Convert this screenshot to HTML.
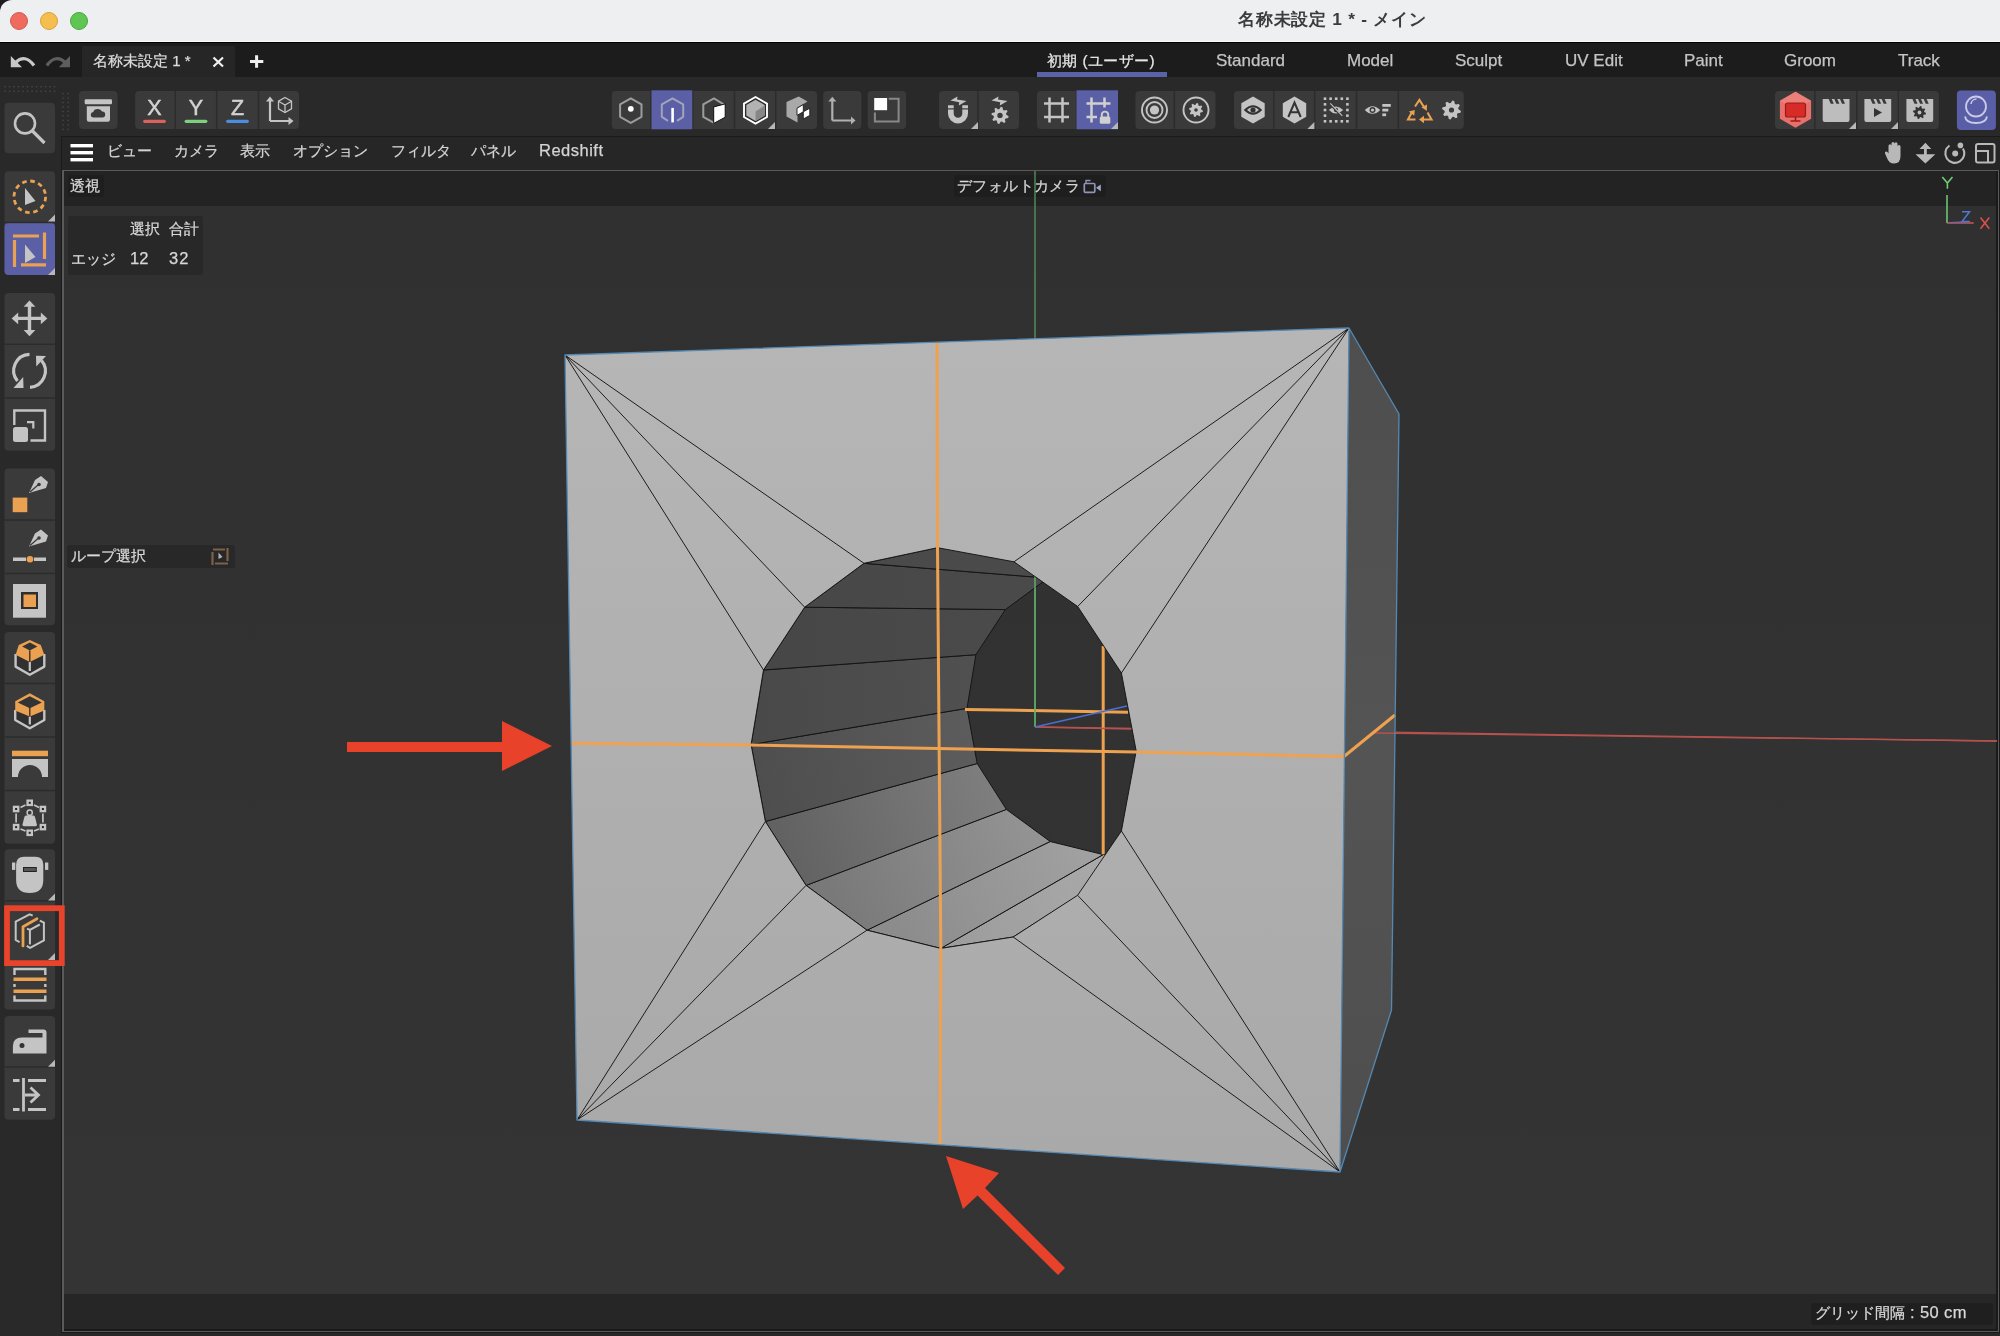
<!DOCTYPE html><html><head><meta charset="utf-8"><style>
*{margin:0;padding:0;box-sizing:border-box}
html,body{width:2000px;height:1336px;overflow:hidden;background:#1e1e1e;font-family:"Liberation Sans",sans-serif;}
.a{position:absolute}
.t{position:absolute;white-space:nowrap;line-height:1;will-change:transform;-webkit-text-stroke:0.25px currentColor}
.btn{position:absolute;background:#3a3a3a;border-radius:4px}
.sep{position:absolute;background:#2a2a2a;width:1px}
</style></head><body>
<div class="a" style="left:0;top:0;width:2000px;height:42px;background:#eeeff1;border-top-left-radius:12px"></div>
<div class="a" style="left:0;top:0;width:12px;height:12px;background:#161a2e;z-index:-1"></div>
<div class="a" style="left:10px;top:11.8px;width:18px;height:18px;border-radius:50%;background:#ee6b5e;border:0.8px solid #d35a4f"></div>
<div class="a" style="left:40px;top:11.8px;width:18px;height:18px;border-radius:50%;background:#f5bf4f;border:0.8px solid #d9a13c"></div>
<div class="a" style="left:70px;top:11.8px;width:18px;height:18px;border-radius:50%;background:#5fc553;border:0.8px solid #4aa73f"></div>
<div class="t" style="left:1238px;top:11px;font-size:17.3px;letter-spacing:0.75px;font-weight:bold;color:#3c3c3c;-webkit-text-stroke:0">名称未設定 1 * - メイン</div>
<div class="a" style="left:0;top:41px;width:2000px;height:1px;background:#fafafa"></div>
<div class="a" style="left:0;top:42px;width:2000px;height:1px;background:#000"></div>
<div class="a" style="left:0;top:43px;width:2000px;height:34px;background:#1c1c1c"></div>
<div class="a" style="left:82px;top:46px;width:153px;height:31px;background:#262626"></div>
<div class="t" style="left:93px;top:53px;font-size:15px;color:#dcdcdc">名称未設定 1 *</div>
<div class="t" style="left:1047px;top:52.5px;font-size:15.3px;letter-spacing:0.4px;color:#e6e6e6">初期 (ユーザー)</div>
<div class="t" style="left:1216px;top:52px;font-size:17px;color:#c4c4c4">Standard</div>
<div class="t" style="left:1347px;top:52px;font-size:17px;color:#c4c4c4">Model</div>
<div class="t" style="left:1455px;top:52px;font-size:17px;color:#c4c4c4">Sculpt</div>
<div class="t" style="left:1565px;top:52px;font-size:17px;color:#c4c4c4">UV Edit</div>
<div class="t" style="left:1684px;top:52px;font-size:17px;color:#c4c4c4">Paint</div>
<div class="t" style="left:1784px;top:52px;font-size:17px;color:#c4c4c4">Groom</div>
<div class="t" style="left:1898px;top:52px;font-size:17px;color:#c4c4c4">Track</div>
<div class="a" style="left:1037px;top:72px;width:130px;height:5px;background:#5b63a8"></div>
<div class="a" style="left:0;top:77px;width:2000px;height:59px;background:#292929"></div>
<div class="a" style="left:0;top:77px;width:61px;height:1259px;background:#292929"></div>
<div class="a" style="left:61px;top:136px;width:1939px;height:1200px;background:#1a1a1a"></div>
<div class="a" style="left:62px;top:137px;width:1938px;height:33px;background:#262626"></div>
<div class="a" style="left:62px;top:170px;width:1937px;height:1162px;border:1px solid #5a5a5a;border-left-width:2px"></div>
<div class="a" style="left:61px;top:1333px;width:1939px;height:3px;background:#282828"></div>
<div class="a" style="left:64px;top:171px;width:1932px;height:35px;background:#232323"></div>
<div class="a" style="left:64px;top:206px;width:1932px;height:1088px;background:linear-gradient(#303030,#343434)"></div>
<div class="a" style="left:64px;top:1294px;width:1932px;height:35px;background:#262626"></div>
<svg class="a" style="left:0;top:0" width="2000" height="1336" viewBox="0 0 2000 1336">
<defs>
<linearGradient id="gf" x1="0" y1="0" x2="0" y2="1"><stop offset="0" stop-color="#b6b6b6"/><stop offset="1" stop-color="#a9a9a9"/></linearGradient>
<linearGradient id="gs" x1="0" y1="0" x2="0" y2="1"><stop offset="0" stop-color="#4e4e4e"/><stop offset="0.5" stop-color="#545454"/><stop offset="1" stop-color="#4e4e4e"/></linearGradient>
</defs>
<line x1="1035" y1="727" x2="1997" y2="741" stroke="#b5524e" stroke-width="1.35"/>
<line x1="1035" y1="206" x2="1035" y2="727" stroke="#5aa268" stroke-width="1.2"/>
<defs><linearGradient id="tq7" gradientUnits="userSpaceOnUse" x1="977.0" y1="942.7" x2="1129.2" y2="850.5"><stop offset="0" stop-color="#9e9e9e"/><stop offset="1" stop-color="#ababab"/></linearGradient><linearGradient id="tq8" gradientUnits="userSpaceOnUse" x1="903.9" y1="939.3" x2="1076.7" y2="848.1"><stop offset="0" stop-color="#8c8c8c"/><stop offset="1" stop-color="#a0a0a0"/></linearGradient><linearGradient id="tq9" gradientUnits="userSpaceOnUse" x1="836.5" y1="907.8" x2="1028.3" y2="825.4"><stop offset="0" stop-color="#797979"/><stop offset="1" stop-color="#939393"/></linearGradient><linearGradient id="tq10" gradientUnits="userSpaceOnUse" x1="785.8" y1="853.5" x2="991.8" y2="786.4"><stop offset="0" stop-color="#626262"/><stop offset="1" stop-color="#7e7e7e"/></linearGradient><linearGradient id="tq11" gradientUnits="userSpaceOnUse" x1="758.2" y1="783.0" x2="972.1" y2="735.9"><stop offset="0" stop-color="#4e4e4e"/><stop offset="1" stop-color="#5c5c5c"/></linearGradient><linearGradient id="tq12" gradientUnits="userSpaceOnUse" x1="757.3" y1="707.3" x2="971.4" y2="681.5"><stop offset="0" stop-color="#494949"/><stop offset="1" stop-color="#505050"/></linearGradient><linearGradient id="tq13" gradientUnits="userSpaceOnUse" x1="784.1" y1="638.6" x2="990.7" y2="632.2"><stop offset="0" stop-color="#474747"/><stop offset="1" stop-color="#4a4a4a"/></linearGradient><linearGradient id="tq14" gradientUnits="userSpaceOnUse" x1="834.4" y1="585.2" x2="1026.7" y2="593.8"><stop offset="0" stop-color="#484848"/><stop offset="1" stop-color="#4a4a4a"/></linearGradient><linearGradient id="tq15" gradientUnits="userSpaceOnUse" x1="900.8" y1="555.5" x2="1074.4" y2="572.5"><stop offset="0" stop-color="#4a4a4a"/><stop offset="1" stop-color="#4b4b4b"/></linearGradient></defs>
<polygon points="1013.2,937.0 940.8,948.4 1103.2,854.6 1155.1,846.4" fill="url(#tq7)" stroke="#151515" stroke-width="1" stroke-linejoin="round"/>
<polygon points="940.8,948.4 867.0,930.2 1050.2,841.5 1103.2,854.6" fill="url(#tq8)" stroke="#151515" stroke-width="1" stroke-linejoin="round"/>
<polygon points="867.0,930.2 806.1,885.4 1006.4,809.4 1050.2,841.5" fill="url(#tq9)" stroke="#151515" stroke-width="1" stroke-linejoin="round"/>
<polygon points="806.1,885.4 765.4,821.5 977.2,763.5 1006.4,809.4" fill="url(#tq10)" stroke="#151515" stroke-width="1" stroke-linejoin="round"/>
<polygon points="765.4,821.5 751.1,744.6 967.0,708.3 977.2,763.5" fill="url(#tq11)" stroke="#151515" stroke-width="1" stroke-linejoin="round"/>
<polygon points="751.1,744.6 763.5,670.0 975.9,654.7 967.0,708.3" fill="url(#tq12)" stroke="#151515" stroke-width="1" stroke-linejoin="round"/>
<polygon points="763.5,670.0 804.7,607.2 1005.4,609.6 975.9,654.7" fill="url(#tq13)" stroke="#151515" stroke-width="1" stroke-linejoin="round"/>
<polygon points="804.7,607.2 864.0,563.3 1048.0,578.1 1005.4,609.6" fill="url(#tq14)" stroke="#151515" stroke-width="1" stroke-linejoin="round"/>
<polygon points="864.0,563.3 937.5,547.7 1100.8,566.9 1048.0,578.1" fill="url(#tq15)" stroke="#151515" stroke-width="1" stroke-linejoin="round"/>
<line x1="965" y1="709.4" x2="1128" y2="712.3" stroke="#eea24f" stroke-width="3"/>
<line x1="1103.2" y1="646" x2="1103.2" y2="854.3" stroke="#eea24f" stroke-width="3"/>
<line x1="1035" y1="560" x2="1035" y2="727" stroke="#5fae6a" stroke-width="1.5"/>
<line x1="1035" y1="727" x2="1131" y2="729" stroke="#b5524f" stroke-width="1.6"/>
<line x1="1035" y1="727" x2="1127" y2="706" stroke="#4a6fd0" stroke-width="1.6"/>
<path d="M565,355 L1349,328 L1340,1172 L577,1120 Z M937.5,547.7 L1014.0,561.8 L1077.7,606.5 L1121.4,673.0 L1136.2,751.0 L1121.4,831.0 L1077.6,895.3 L1013.2,937.0 L940.8,948.4 L867.0,930.2 L806.1,885.4 L765.4,821.5 L751.1,744.6 L763.5,670.0 L804.7,607.2 L864.0,563.3 Z" fill="url(#gf)" fill-rule="evenodd"/>
<polygon points="1349.0,328.0 1399.0,414.0 1391.5,1010.0 1340.0,1172.0" fill="url(#gs)"/>
<line x1="1375" y1="733" x2="1997" y2="741" stroke="#b5524e" stroke-width="1.35"/>
<path d="M565,355 L763.5,670.0 M565,355 L804.7,607.2 M565,355 L864.0,563.3 M1349,328 L1014.0,561.8 M1349,328 L1077.7,606.5 M1349,328 L1121.4,673.0 M1340,1172 L1121.4,831.0 M1340,1172 L1077.6,895.3 M1340,1172 L1013.2,937.0 M577,1120 L867.0,930.2 M577,1120 L806.1,885.4 M577,1120 L765.4,821.5 M937.5,547.7 L1014.0,561.8 L1077.7,606.5 L1121.4,673.0 L1136.2,751.0 L1121.4,831.0 L1077.6,895.3 L1013.2,937.0 L940.8,948.4 L867.0,930.2 L806.1,885.4 L765.4,821.5 L751.1,744.6 L763.5,670.0 L804.7,607.2 L864.0,563.3 Z" fill="none" stroke="#151515" stroke-width="0.95"/>
<polyline points="937,343 937.5,547.7 940.8,948.4 940,1145" fill="none" stroke="#eea24f" stroke-width="3"/>
<polyline points="571,743.2 751.1,745 937.8,748.5 1136.2,752 1344,756.5 1395,715" fill="none" stroke="#eea24f" stroke-width="3" stroke-linejoin="round"/>
<polyline points="1340.0,1172.0 577.0,1120.0 565.0,355.0 1349.0,328.0 1399.0,414.0 1391.5,1010.0 1340.0,1172.0 1349.0,328.0" fill="none" stroke="#5589b3" stroke-width="1.3" stroke-linejoin="round"/>
<path d="M347,742 L502,742 L502,721 L552,746 L502,771 L502,752 L347,752 Z" fill="#e8422a"/>
<path d="M946,1156 L999,1173 L985,1188 L1065,1268 L1058,1275 L977.5,1195.5 L963,1209 Z" fill="#e8422a"/>
</svg>
<div class="t" style="left:106.5px;top:143px;font-size:15px;color:#d4d4d4">ビュー</div>
<div class="t" style="left:174px;top:143px;font-size:15px;color:#d4d4d4">カメラ</div>
<div class="t" style="left:240px;top:143px;font-size:15px;color:#d4d4d4">表示</div>
<div class="t" style="left:292.5px;top:143px;font-size:15px;color:#d4d4d4">オプション</div>
<div class="t" style="left:390.5px;top:143px;font-size:15px;color:#d4d4d4">フィルタ</div>
<div class="t" style="left:471px;top:143px;font-size:15px;color:#d4d4d4">パネル</div>
<div class="t" style="left:538.5px;top:142px;font-size:16.5px;letter-spacing:0.5px;color:#d4d4d4">Redshift</div>
<div class="a" style="left:67.5px;top:175px;width:36.5px;height:22px;background:#1e1e1e;border-radius:3px"></div>
<div class="t" style="left:70px;top:178px;font-size:15px;color:#d8d8d8">透視</div>
<div class="a" style="left:953.5px;top:175px;width:152px;height:22px;background:#1e1e1e;border-radius:3px"></div>
<div class="t" style="left:956.5px;top:178px;font-size:15px;letter-spacing:0.4px;color:#d8d8d8">デフォルトカメラ</div>
<div class="a" style="left:67.5px;top:216px;width:135.5px;height:58.5px;background:#282828;border-radius:3px"></div>
<div class="t" style="left:129.5px;top:221px;font-size:15px;color:#d8d8d8">選択</div>
<div class="t" style="left:168.5px;top:221px;font-size:15px;color:#d8d8d8">合計</div>
<div class="t" style="left:70.5px;top:251px;font-size:15px;color:#d8d8d8">エッジ</div>
<div class="t" style="left:129.5px;top:250px;font-size:16.5px;color:#d8d8d8">12</div>
<div class="t" style="left:168.5px;top:250px;font-size:16.5px;letter-spacing:1px;color:#d8d8d8">32</div>
<div class="a" style="left:67px;top:544.5px;width:167.5px;height:23px;background:#282828;border-radius:3px"></div>
<div class="t" style="left:71px;top:548px;font-size:15px;color:#d8d8d8">ループ選択</div>
<div class="a" style="left:1811px;top:1302.7px;width:182px;height:22.3px;background:#1f1f1f;border-radius:3px"></div>
<div class="t" style="left:1815px;top:1304px;font-size:15px;color:#d8d8d8">グリッド間隔<span style="font-size:16.5px;letter-spacing:0.4px"> : 50 cm</span></div>
<svg class="a" style="left:0;top:0" width="2000" height="1336"><rect x="79" y="91" width="38.5" height="38" rx="4" fill="#3a3a3a"/>
<rect x="135.2" y="91" width="163.8" height="38" rx="4" fill="#3a3a3a"/>
<rect x="174.5" y="91" width="1.5" height="38" fill="#2c2c2c"/>
<rect x="215.9" y="91" width="1.5" height="38" fill="#2c2c2c"/>
<rect x="257.7" y="91" width="1.5" height="38" fill="#2c2c2c"/>
<rect x="611.8" y="91" width="205.20000000000005" height="38" rx="4" fill="#3a3a3a"/>
<rect x="650.3" y="91" width="1.5" height="38" fill="#2c2c2c"/>
<rect x="692.0" y="91" width="1.5" height="38" fill="#2c2c2c"/>
<rect x="733.7" y="91" width="1.5" height="38" fill="#2c2c2c"/>
<rect x="775.0" y="91" width="1.5" height="38" fill="#2c2c2c"/>
<rect x="651.5" y="90.3" width="40.8" height="39" fill="#5a5fa6"/>
<rect x="823.2" y="91" width="38.19999999999993" height="38" rx="4" fill="#3a3a3a"/>
<rect x="867.7" y="91" width="38.299999999999955" height="38" rx="4" fill="#3a3a3a"/>
<rect x="939" y="91" width="80" height="38" rx="4" fill="#3a3a3a"/>
<rect x="977.2" y="91" width="1.5" height="38" fill="#2c2c2c"/>
<rect x="1037" y="91" width="81" height="38" rx="4" fill="#3a3a3a"/>
<rect x="1075.8" y="91" width="1.5" height="38" fill="#2c2c2c"/>
<rect x="1076.5" y="90.3" width="41.5" height="39" fill="#5a5fa6" />
<rect x="1135.4" y="91" width="80.09999999999991" height="38" rx="4" fill="#3a3a3a"/>
<rect x="1173.6" y="91" width="1.5" height="38" fill="#2c2c2c"/>
<rect x="1234" y="91" width="229.79999999999995" height="38" rx="4" fill="#3a3a3a"/>
<rect x="1273.0" y="91" width="1.5" height="38" fill="#2c2c2c"/>
<rect x="1313.9" y="91" width="1.5" height="38" fill="#2c2c2c"/>
<rect x="1355.8" y="91" width="1.5" height="38" fill="#2c2c2c"/>
<rect x="1397.6" y="91" width="1.5" height="38" fill="#2c2c2c"/>
<rect x="1775" y="91" width="163.9000000000001" height="38" rx="4" fill="#3a3a3a"/>
<rect x="1814.1" y="91" width="1.5" height="38" fill="#2c2c2c"/>
<rect x="1856.1" y="91" width="1.5" height="38" fill="#2c2c2c"/>
<rect x="1897.5" y="91" width="1.5" height="38" fill="#2c2c2c"/>
<rect x="1956.9" y="90.4" width="39.0" height="39.599999999999994" rx="4" fill="#5a5ea6"/>
<rect x="4.5" y="102.8" width="50.5" height="50.39999999999999" rx="4" fill="#3a3a3a"/>
<rect x="4.5" y="171.2" width="50.5" height="103.80000000000001" rx="4" fill="#3a3a3a"/>
<rect x="4.5" y="223" width="50.5" height="52" rx="4" fill="#5a5fa6"/>
<rect x="4.5" y="221.7" width="50.5" height="1.5" fill="#2c2c2c"/>
<rect x="4.5" y="292.9" width="50.5" height="157.90000000000003" rx="4" fill="#3a3a3a"/>
<rect x="4.5" y="343.5" width="50.5" height="1.5" fill="#2c2c2c"/>
<rect x="4.5" y="397.2" width="50.5" height="1.5" fill="#2c2c2c"/>
<rect x="4.5" y="468.4" width="50.5" height="156.89999999999998" rx="4" fill="#3a3a3a"/>
<rect x="4.5" y="519.3" width="50.5" height="1.5" fill="#2c2c2c"/>
<rect x="4.5" y="572.7" width="50.5" height="1.5" fill="#2c2c2c"/>
<rect x="4.5" y="632.1" width="50.5" height="211.69999999999993" rx="4" fill="#3a3a3a"/>
<rect x="4.5" y="682.7" width="50.5" height="1.5" fill="#2c2c2c"/>
<rect x="4.5" y="736.2" width="50.5" height="1.5" fill="#2c2c2c"/>
<rect x="4.5" y="789.8" width="50.5" height="1.5" fill="#2c2c2c"/>
<rect x="4.5" y="849.2" width="50.5" height="160.39999999999998" rx="4" fill="#3a3a3a"/>
<rect x="4.5" y="900.1" width="50.5" height="1.5" fill="#2c2c2c"/>
<rect x="4.5" y="960.0" width="50.5" height="1.5" fill="#2c2c2c"/>
<rect x="4.5" y="1016" width="50.5" height="103.70000000000005" rx="4" fill="#3a3a3a"/>
<rect x="4.5" y="1066.3" width="50.5" height="1.5" fill="#2c2c2c"/>
<polygon points="775,129 768,129 775,122" fill="#b8b8b8"/>
<polygon points="978,129 971,129 978,122" fill="#b8b8b8"/>
<polygon points="1314.4,129 1307.4,129 1314.4,122" fill="#b8b8b8"/>
<polygon points="1856,129 1849,129 1856,122" fill="#b8b8b8"/>
<polygon points="1898,129 1891,129 1898,122" fill="#b8b8b8"/>
<polygon points="1118,129 1111,129 1118,122" fill="#b8b8b8"/>
<polygon points="55,221.5 48,221.5 55,214.5" fill="#b8b8b8"/>
<polygon points="55,275 48,275 55,268" fill="#b8b8b8"/>
<polygon points="55,900.5 48,900.5 55,893.5" fill="#b8b8b8"/>
<polygon points="55,960 48,960 55,953" fill="#b8b8b8"/>
<polygon points="55,1066.8 48,1066.8 55,1059.8" fill="#b8b8b8"/>
<rect x="4.4" y="86.05" width="1.3" height="1.3" fill="#4c4c4c"/>
<rect x="8.9" y="86.05" width="1.3" height="1.3" fill="#4c4c4c"/>
<rect x="13.4" y="86.05" width="1.3" height="1.3" fill="#4c4c4c"/>
<rect x="17.9" y="86.05" width="1.3" height="1.3" fill="#4c4c4c"/>
<rect x="22.4" y="86.05" width="1.3" height="1.3" fill="#4c4c4c"/>
<rect x="26.9" y="86.05" width="1.3" height="1.3" fill="#4c4c4c"/>
<rect x="31.4" y="86.05" width="1.3" height="1.3" fill="#4c4c4c"/>
<rect x="35.9" y="86.05" width="1.3" height="1.3" fill="#4c4c4c"/>
<rect x="40.4" y="86.05" width="1.3" height="1.3" fill="#4c4c4c"/>
<rect x="44.9" y="86.05" width="1.3" height="1.3" fill="#4c4c4c"/>
<rect x="49.4" y="86.05" width="1.3" height="1.3" fill="#4c4c4c"/>
<rect x="53.9" y="86.05" width="1.3" height="1.3" fill="#4c4c4c"/>
<rect x="4.4" y="90.64999999999999" width="1.3" height="1.3" fill="#4c4c4c"/>
<rect x="8.9" y="90.64999999999999" width="1.3" height="1.3" fill="#4c4c4c"/>
<rect x="13.4" y="90.64999999999999" width="1.3" height="1.3" fill="#4c4c4c"/>
<rect x="17.9" y="90.64999999999999" width="1.3" height="1.3" fill="#4c4c4c"/>
<rect x="22.4" y="90.64999999999999" width="1.3" height="1.3" fill="#4c4c4c"/>
<rect x="26.9" y="90.64999999999999" width="1.3" height="1.3" fill="#4c4c4c"/>
<rect x="31.4" y="90.64999999999999" width="1.3" height="1.3" fill="#4c4c4c"/>
<rect x="35.9" y="90.64999999999999" width="1.3" height="1.3" fill="#4c4c4c"/>
<rect x="40.4" y="90.64999999999999" width="1.3" height="1.3" fill="#4c4c4c"/>
<rect x="44.9" y="90.64999999999999" width="1.3" height="1.3" fill="#4c4c4c"/>
<rect x="49.4" y="90.64999999999999" width="1.3" height="1.3" fill="#4c4c4c"/>
<rect x="53.9" y="90.64999999999999" width="1.3" height="1.3" fill="#4c4c4c"/>
<rect x="62.35" y="93.0" width="1.3" height="1.3" fill="#4c4c4c"/>
<rect x="62.35" y="97.5" width="1.3" height="1.3" fill="#4c4c4c"/>
<rect x="62.35" y="101.9" width="1.3" height="1.3" fill="#4c4c4c"/>
<rect x="62.35" y="106.3" width="1.3" height="1.3" fill="#4c4c4c"/>
<rect x="62.35" y="110.8" width="1.3" height="1.3" fill="#4c4c4c"/>
<rect x="62.35" y="115.2" width="1.3" height="1.3" fill="#4c4c4c"/>
<rect x="62.35" y="119.7" width="1.3" height="1.3" fill="#4c4c4c"/>
<rect x="62.35" y="124.2" width="1.3" height="1.3" fill="#4c4c4c"/>
<rect x="62.35" y="128.6" width="1.3" height="1.3" fill="#4c4c4c"/>
<rect x="67.55" y="93.0" width="1.3" height="1.3" fill="#4c4c4c"/>
<rect x="67.55" y="97.5" width="1.3" height="1.3" fill="#4c4c4c"/>
<rect x="67.55" y="101.9" width="1.3" height="1.3" fill="#4c4c4c"/>
<rect x="67.55" y="106.3" width="1.3" height="1.3" fill="#4c4c4c"/>
<rect x="67.55" y="110.8" width="1.3" height="1.3" fill="#4c4c4c"/>
<rect x="67.55" y="115.2" width="1.3" height="1.3" fill="#4c4c4c"/>
<rect x="67.55" y="119.7" width="1.3" height="1.3" fill="#4c4c4c"/>
<rect x="67.55" y="124.2" width="1.3" height="1.3" fill="#4c4c4c"/>
<rect x="67.55" y="128.6" width="1.3" height="1.3" fill="#4c4c4c"/><rect x="84.7" y="99.3" width="27.3" height="5" rx="1.2" fill="#c4c4c4"/>
<path d="M86.8,106.3 H110 V119.5 Q110,121.7 107.8,121.7 H89 Q86.8,121.7 86.8,119.5 Z" fill="#c4c4c4"/>
<path d="M93.5,117.5 Q90.8,117.5 90.8,114.8 Q90.8,112.3 93.3,112.1 Q94,108.8 97.8,108.9 Q101,108.8 102,111.5 Q105.2,111.3 105.2,114.5 Q105.2,117.5 102.5,117.5 Z" fill="#3a3a3a"/>
<text x="154.5" y="114.6" font-family="Liberation Sans" font-size="21.5" fill="#d2d2d2" stroke="#d2d2d2" stroke-width="0.5" text-anchor="middle">X</text>
<line x1="144.7" y1="121.3" x2="164.3" y2="121.3" stroke="#d9625c" stroke-width="3.2" stroke-linecap="round"/>
<text x="196" y="114.6" font-family="Liberation Sans" font-size="21.5" fill="#d2d2d2" stroke="#d2d2d2" stroke-width="0.5" text-anchor="middle">Y</text>
<line x1="186.2" y1="121.3" x2="205.8" y2="121.3" stroke="#7dd07d" stroke-width="3.2" stroke-linecap="round"/>
<text x="237.5" y="114.6" font-family="Liberation Sans" font-size="21.5" fill="#d2d2d2" stroke="#d2d2d2" stroke-width="0.5" text-anchor="middle">Z</text>
<line x1="227.7" y1="121.3" x2="247.3" y2="121.3" stroke="#4a8ee0" stroke-width="3.2" stroke-linecap="round"/>
<path d="M270,121 V100 M270,121 H290" stroke="#c4c4c4" stroke-width="2.2" fill="none"/>
<polygon points="270,96.5 266,101.5 274,101.5" fill="#c4c4c4"/><polygon points="293.5,121 288.5,117 288.5,125" fill="#c4c4c4"/>
<polygon points="285.0,97.5 291.5,101.2 291.5,108.8 285.0,112.5 278.5,108.8 278.5,101.2" fill="none" stroke="#c4c4c4" stroke-width="1.3"/>
<path d="M278.5,101.2 L285,105 L291.5,101.2 M285,105 V112.5" stroke="#c4c4c4" stroke-width="1.3" fill="none"/>
<polygon points="630.8,98.3 641.5,104.4 641.5,116.8 630.8,122.9 620.1,116.8 620.1,104.4" fill="none" stroke="#9c9c9c" stroke-width="2" stroke-linejoin="round"/>
<circle cx="630.8" cy="108.8" r="2.9" fill="#fff"/>
<path d="M668.0,120.89999999999999 L661.8,116.8 L661.8,104.4 L672.5,98.3 L683.2,104.4 L683.2,116.8 L677.0,120.89999999999999" fill="none" stroke="#a3a3bb" stroke-width="2" stroke-linejoin="round"/>
<rect x="671.3" y="107.9" width="2.6" height="14.5" fill="#fff"/>
<path d="M714.0,122.9 L703.3,116.8 L703.3,104.4 L714.0,98.3 L723.7,104.4" fill="none" stroke="#9c9c9c" stroke-width="2"/>
<polygon points="725.2,103.9 725.2,117.2 713.7,123.4 713.7,106.9" fill="#fff" stroke="#111" stroke-width="1"/>
<polygon points="755.5,97.0 767.0,103.6 767.0,117.0 755.5,123.6 744.0,117.0 744.0,103.6" fill="#2a2a2a" stroke="#fff" stroke-width="1.9"/>
<polygon points="755.5,99.7 764.7,105.0 764.7,115.6 755.5,120.9 746.3,115.6 746.3,105.0" fill="#b2b2b2"/>
<polygon points="755.5,111.5 764.7,105.5 764.7,115.6 755.5,120.9" fill="#878787"/>
<polygon points="786.5,102 798.7,96.5 807.5,101.5 797.5,107.5 797.5,122.5 786.5,116.5" fill="#a9a9a9"/>
<polygon points="797,108.2 803.3,104.6 803.3,111.8 797,115.4" fill="#fff" stroke="#1a1a1a" stroke-width="0.9"/>
<polygon points="803.3,111.8 809.8,108.2 809.8,115.4 803.3,119" fill="#fff" stroke="#1a1a1a" stroke-width="0.9"/>
<path d="M832.3,120.5 V101 M832.3,120.5 H852" stroke="#b0b0b0" stroke-width="2.2" fill="none"/>
<polygon points="832.3,96.8 828.3,101.5 836.3,101.5" fill="#b0b0b0"/><polygon points="855.5,120.5 851,116.5 851,124.5" fill="#b0b0b0"/>
<rect x="874.2" y="98" width="12.9" height="12.2" fill="#fff"/>
<path d="M888.7,98.7 H898.6 V121.6 H874.9 V112.5" fill="none" stroke="#888" stroke-width="2"/>
<path d="M948,105.3 V113.4 A10,10 0 0 0 968,113.4 V105.3 H962.3 V113.4 A4.3,4.3 0 0 1 953.7,113.4 V105.3 Z" fill="#c4c4c4"/>
<rect x="947" y="108.3" width="22" height="1.2" fill="#3a3a3a"/>
<polygon points="950.5,100.5 957.5,96.5 957,99.6 966.5,101 958.8,105.5 959.2,102.3" fill="#c4c4c4"/>
<polygon points="1008.6,116.2 1008.2,117.9 1005.6,118.4 1004.9,119.4 1005.5,122.0 1004.1,123.0 1001.8,121.4 1000.6,121.7 999.2,124.0 997.5,123.6 997.0,121.0 996.0,120.3 993.4,120.9 992.4,119.5 994.0,117.2 993.7,116.0 991.4,114.6 991.8,112.9 994.4,112.4 995.1,111.4 994.5,108.8 995.9,107.8 998.2,109.4 999.4,109.1 1000.8,106.8 1002.5,107.2 1003.0,109.8 1004.0,110.5 1006.6,109.9 1007.6,111.3 1006.0,113.6 1006.3,114.8" fill="#c4c4c4"/><circle cx="1000" cy="115.4" r="2.7" fill="#3a3a3a"/>
<polygon points="991.5,100.5 998.5,96.5 998,99.6 1007.5,101 999.8,105.5 1000.2,102.3" fill="#c4c4c4"/>
<path d="M1049.5,97.5 V122.5 M1062.5,97.5 V122.5 M1044,103.5 H1069 M1044,117 H1069" stroke="#c4c4c4" stroke-width="2.5" fill="none"/>
<path d="M1091.5,97.5 V122.5 M1104.5,97.5 V107.5 M1086.5,103.5 H1110.5 M1086.5,117 H1097" stroke="#d0d0d0" stroke-width="2.5" fill="none"/>
<path d="M1101.8,117 V114.8 A3.2,3.2 0 0 1 1108.2,114.8 V117" fill="none" stroke="#d0d0d0" stroke-width="1.9"/>
<rect x="1099.8" y="116.5" width="10.5" height="7.3" rx="1.5" fill="#d0d0d0"/>
<circle cx="1154.5" cy="110" r="12.5" fill="none" stroke="#c4c4c4" stroke-width="1.9"/>
<circle cx="1154.5" cy="110" r="8" fill="none" stroke="#c4c4c4" stroke-width="1.9"/>
<circle cx="1154.5" cy="110" r="4.6" fill="#c4c4c4"/>
<circle cx="1196" cy="110" r="12.5" fill="none" stroke="#c4c4c4" stroke-width="1.9"/>
<polygon points="1203.0,110.7 1202.7,112.0 1200.6,112.5 1200.0,113.3 1200.4,115.4 1199.3,116.2 1197.5,115.0 1196.5,115.2 1195.3,117.0 1194.0,116.7 1193.5,114.6 1192.7,114.0 1190.6,114.4 1189.8,113.3 1191.0,111.5 1190.8,110.5 1189.0,109.3 1189.3,108.0 1191.4,107.5 1192.0,106.7 1191.6,104.6 1192.7,103.8 1194.5,105.0 1195.5,104.8 1196.7,103.0 1198.0,103.3 1198.5,105.4 1199.3,106.0 1201.4,105.6 1202.2,106.7 1201.0,108.5 1201.2,109.5" fill="#c4c4c4"/><circle cx="1196" cy="110" r="1.8" fill="#3a3a3a"/>
<polygon points="1253.0,96.5 1264.7,103.2 1264.7,116.8 1253.0,123.5 1241.3,116.8 1241.3,103.2" fill="#c4c4c4"/>
<path d="M1245.3,110 Q1253,102.5 1260.7,110 Q1253,117.5 1245.3,110 Z" fill="none" stroke="#333" stroke-width="2.1"/><circle cx="1253" cy="110" r="2.6" fill="#333"/>
<polygon points="1294.5,96.5 1306.2,103.2 1306.2,116.8 1294.5,123.5 1282.8,116.8 1282.8,103.2" fill="#c4c4c4"/>
<path d="M1288.3,117 L1294.5,102.5 L1300.7,117 M1290.3,112.3 H1298.7" fill="none" stroke="#333" stroke-width="2"/>
<rect x="1323.7" y="97.4" width="2.6" height="2.6" fill="#c4c4c4"/>
<rect x="1323.7" y="120.0" width="2.6" height="2.6" fill="#c4c4c4"/>
<rect x="1329.3" y="97.4" width="2.6" height="2.6" fill="#c4c4c4"/>
<rect x="1329.3" y="120.0" width="2.6" height="2.6" fill="#c4c4c4"/>
<rect x="1334.9" y="97.4" width="2.6" height="2.6" fill="#c4c4c4"/>
<rect x="1334.9" y="120.0" width="2.6" height="2.6" fill="#c4c4c4"/>
<rect x="1340.5" y="97.4" width="2.6" height="2.6" fill="#c4c4c4"/>
<rect x="1340.5" y="120.0" width="2.6" height="2.6" fill="#c4c4c4"/>
<rect x="1346.1000000000001" y="97.4" width="2.6" height="2.6" fill="#c4c4c4"/>
<rect x="1346.1000000000001" y="120.0" width="2.6" height="2.6" fill="#c4c4c4"/>
<rect x="1323.7" y="103.05000000000001" width="2.6" height="2.6" fill="#c4c4c4"/>
<rect x="1346.1000000000001" y="103.05000000000001" width="2.6" height="2.6" fill="#c4c4c4"/>
<rect x="1323.7" y="108.7" width="2.6" height="2.6" fill="#c4c4c4"/>
<rect x="1346.1000000000001" y="108.7" width="2.6" height="2.6" fill="#c4c4c4"/>
<rect x="1323.7" y="114.35000000000001" width="2.6" height="2.6" fill="#c4c4c4"/>
<rect x="1346.1000000000001" y="114.35000000000001" width="2.6" height="2.6" fill="#c4c4c4"/>
<path d="M1328.8,110 Q1336,103 1343.2,110 Q1336,117 1328.8,110 Z" fill="#c4c4c4"/><circle cx="1336" cy="110" r="2.2" fill="#3a3a3a"/><circle cx="1336" cy="110" r="0.9" fill="#c4c4c4"/>
<line x1="1330" y1="104" x2="1342" y2="116.5" stroke="#3a3a3a" stroke-width="2"/><line x1="1330.3" y1="103.3" x2="1342.3" y2="115.8" stroke="#c4c4c4" stroke-width="1.1"/>
<path d="M1364.8,110 Q1372.5,102.3 1380.2,110 Q1372.5,117.7 1364.8,110 Z" fill="#c4c4c4"/><circle cx="1372.5" cy="110" r="3" fill="#3a3a3a"/><circle cx="1372.5" cy="110" r="1.6" fill="#c4c4c4"/>
<rect x="1382.3" y="104" width="8.5" height="2.8" fill="#c4c4c4"/><rect x="1382.3" y="108.7" width="6" height="2.8" fill="#c4c4c4"/><rect x="1382.3" y="113.4" width="3.8" height="2.8" fill="#c4c4c4"/>
<path d="M1415,106.5 L1419.4,100 L1424,107 M1427.5,112.5 L1431.5,119.5 H1423 M1415.5,119.5 H1408 L1412,112" fill="none" stroke="#eaa152" stroke-width="2.1" stroke-linejoin="miter"/>
<polygon points="1421.5,107.2 1427,104.5 1426.8,111" fill="#eaa152"/>
<polygon points="1424,115.8 1424,123.2 1419,119.5" fill="#eaa152"/>
<polygon points="1408.8,111.5 1414.8,110 1414.2,115.8" fill="#eaa152"/>
<polygon points="1460.9,110.9 1460.5,112.7 1457.7,113.3 1456.9,114.4 1457.5,117.3 1455.9,118.3 1453.5,116.7 1452.2,117.0 1450.6,119.4 1448.8,119.0 1448.2,116.2 1447.1,115.4 1444.2,116.0 1443.2,114.4 1444.8,112.0 1444.5,110.7 1442.1,109.1 1442.5,107.3 1445.3,106.7 1446.1,105.6 1445.5,102.7 1447.1,101.7 1449.5,103.3 1450.8,103.0 1452.4,100.6 1454.2,101.0 1454.8,103.8 1455.9,104.6 1458.8,104.0 1459.8,105.6 1458.2,108.0 1458.5,109.3" fill="#c4c4c4"/><circle cx="1451.5" cy="110" r="2.6" fill="#3a3a3a"/>
<polygon points="1795.5,91.7 1811.1,100.7 1811.1,118.7 1795.5,127.7 1779.9,118.7 1779.9,100.7" fill="#e8706c"/>
<polygon points="1795.5,91.7 1811.1,100.7 1795.5,109.7 1779.9,100.7" fill="#ec8a86" opacity="0.6"/>
<rect x="1785.5" y="103" width="20" height="14" rx="2" fill="#d62b27" stroke="#9c1a18" stroke-width="1.2"/>
<path d="M1795.5,117 V120.5 M1790.5,121 H1800.5" stroke="#9c1a18" stroke-width="1.6"/>
<path d="M1822.7,99 H1849.5 V120 Q1849.5,122 1847.5,122 H1824.7 Q1822.7,122 1822.7,120 Z" transform="translate(0.0,0)" fill="#bdbdbd"/>
<polygon points="1828.5,98.5 1831.5,98.5 1833.8,103.8 1830.8,103.8" fill="#3a3a3a"/>
<polygon points="1834.1,98.5 1837.1,98.5 1839.3999999999999,103.8 1836.3999999999999,103.8" fill="#3a3a3a"/>
<polygon points="1839.7,98.5 1842.7,98.5 1845.0,103.8 1842.0,103.8" fill="#3a3a3a"/>
<path d="M1822.7,99 H1849.5 V120 Q1849.5,122 1847.5,122 H1824.7 Q1822.7,122 1822.7,120 Z" transform="translate(41.700000000000045,0)" fill="#bdbdbd"/>
<polygon points="1870.2,98.5 1873.2,98.5 1875.5,103.8 1872.5,103.8" fill="#3a3a3a"/>
<polygon points="1875.8,98.5 1878.8,98.5 1881.1,103.8 1878.1,103.8" fill="#3a3a3a"/>
<polygon points="1881.4,98.5 1884.4,98.5 1886.7,103.8 1883.7,103.8" fill="#3a3a3a"/>
<path d="M1822.7,99 H1849.5 V120 Q1849.5,122 1847.5,122 H1824.7 Q1822.7,122 1822.7,120 Z" transform="translate(83.70000000000005,0)" fill="#bdbdbd"/>
<polygon points="1912.2,98.5 1915.2,98.5 1917.5,103.8 1914.5,103.8" fill="#3a3a3a"/>
<polygon points="1917.8,98.5 1920.8,98.5 1923.1,103.8 1920.1,103.8" fill="#3a3a3a"/>
<polygon points="1923.4,98.5 1926.4,98.5 1928.7,103.8 1925.7,103.8" fill="#3a3a3a"/>
<polygon points="1874,108 1874,117 1882,112.5" fill="#333"/>
<polygon points="1926.0,113.1 1925.7,114.4 1923.7,114.8 1923.2,115.5 1923.6,117.5 1922.6,118.2 1920.9,117.1 1920.0,117.3 1918.9,119.0 1917.6,118.7 1917.2,116.7 1916.5,116.2 1914.5,116.6 1913.8,115.6 1914.9,113.9 1914.7,113.0 1913.0,111.9 1913.3,110.6 1915.3,110.2 1915.8,109.5 1915.4,107.5 1916.4,106.8 1918.1,107.9 1919.0,107.7 1920.1,106.0 1921.4,106.3 1921.8,108.3 1922.5,108.8 1924.5,108.4 1925.2,109.4 1924.1,111.1 1924.3,112.0" fill="#333"/><circle cx="1919.5" cy="112.5" r="1.9" fill="#bdbdbd"/>
<circle cx="1976" cy="106.5" r="10" fill="none" stroke="#c9cbe8" stroke-width="1.8"/>
<path d="M1971,104 A5.5,5.5 0 0 1 1976.5,99" fill="none" stroke="#c9cbe8" stroke-width="1.5"/>
<path d="M1965,116.5 Q1966,123 1976,123 Q1986,123 1987,116.5" fill="none" stroke="#c9cbe8" stroke-width="1.8"/>
<circle cx="25" cy="123.4" r="10" fill="none" stroke="#c4c4c4" stroke-width="2.6"/>
<line x1="32.5" y1="131" x2="44.5" y2="143" stroke="#c4c4c4" stroke-width="3.2"/>
<circle cx="29.8" cy="196.8" r="15.8" fill="none" stroke="#eaa152" stroke-width="2.8" stroke-dasharray="4.6 3.67"/>
<polygon points="25,188 35.5,201 25,205" fill="#c4c4c4"/>
<path d="M13,236 H39 M44.5,232.5 V259 M21,264.8 H46 M14.5,240 V267" stroke="#eaa152" stroke-width="3.2" fill="none"/>
<polygon points="25,244.5 35.5,257 25,263" fill="#c4c4c4"/>
<path d="M29.5,305 V332 M17,318.4 H42" stroke="#c4c4c4" stroke-width="3.4"/>
<polygon points="29.5,300.5 23.6,306.8 35.4,306.8" fill="#c4c4c4"/><polygon points="29.5,336.3 23.6,330 35.4,330" fill="#c4c4c4"/>
<polygon points="11.6,318.4 18.2,312.5 18.2,324.3" fill="#c4c4c4"/><polygon points="47.4,318.4 40.8,312.5 40.8,324.3" fill="#c4c4c4"/>
<path d="M29.5,354.3 A16.3,16.3 0 0 0 17.5,381" fill="none" stroke="#c4c4c4" stroke-width="3.2"/>
<path d="M30,387.3 A16.3,16.3 0 0 0 41.5,360.5" fill="none" stroke="#c4c4c4" stroke-width="3.2"/>
<polygon points="13.5,388 23.5,388 23.2,377" fill="#c4c4c4"/><polygon points="46,356 36,355.8 36.3,366.5" fill="#c4c4c4"/>
<path d="M14.3,425 V410.5 H45 V440.5 H30.5" fill="none" stroke="#c4c4c4" stroke-width="2.4"/>
<rect x="13" y="427" width="15" height="15" rx="2.5" fill="#c4c4c4"/>
<path d="M27,422.2 H33.3 V428.5" fill="none" stroke="#c4c4c4" stroke-width="2.2"/>
<polygon points="29,493 35,480 41,476 48,482 46,488" fill="#c4c4c4"/><line x1="30" y1="492" x2="38" y2="485" stroke="#3a3a3a" stroke-width="1.3"/><circle cx="39" cy="484.5" r="1.8" fill="#3a3a3a"/>
<rect x="12.7" y="497.6" width="14.6" height="14.6" fill="#eaa152"/>
<polygon points="29,546.5 35,533.5 41,529.5 48,535.5 46,541.5" fill="#c4c4c4"/><line x1="30" y1="545.5" x2="38" y2="538.5" stroke="#3a3a3a" stroke-width="1.3"/><circle cx="39" cy="538.0" r="1.8" fill="#3a3a3a"/>
<rect x="13" y="557.5" width="13" height="3.5" fill="#c4c4c4"/><rect x="34" y="557.5" width="12" height="3.5" fill="#c4c4c4"/>
<circle cx="30" cy="559.2" r="3.3" fill="#eaa152"/>
<rect x="13" y="584" width="33" height="33.7" fill="#c4c4c4"/><rect x="21" y="592" width="17" height="17" fill="#2e2e2e"/><rect x="23.5" y="594.5" width="12.5" height="12.5" fill="#eaa152"/>
<polygon points="15.6,654.8 29.8,661.9 44.3,654.8 44.3,666.6 29.8,674.8 15.6,666.6" fill="#303030" />
<polyline points="15.6,654 15.6,666.6 29.8,674.8 44.3,666.6 44.3,654" fill="none" stroke="#c4c4c4" stroke-width="2.4" stroke-linejoin="round"/>
<line x1="29.8" y1="662" x2="29.8" y2="671" stroke="#c4c4c4" stroke-width="2.2"/>
<polygon points="29.8,639.9 40.8,645.0 44.3,654.8 29.8,661.9 15.6,654.8 18.8,645.0" fill="#eaa152" />
<polygon points="29.8,642.6 37.4,646.5 29.8,650.5 22.2,646.5" fill="#333" />
<line x1="29.8" y1="650.5" x2="29.8" y2="662" stroke="#222" stroke-width="1.2"/>
<polygon points="15.2,710.6 29.8,716.5 44.3,710.6 44.3,720.0 29.8,728.3 15.2,720.0" fill="#303030" />
<polyline points="15.2,710 15.2,720 29.8,728.3 44.3,720 44.3,710" fill="none" stroke="#c4c4c4" stroke-width="2.4" stroke-linejoin="round"/>
<line x1="29.8" y1="716.5" x2="29.8" y2="724.5" stroke="#c4c4c4" stroke-width="2.2"/>
<polygon points="29.8,693.3 44.3,701.2 44.3,710.6 29.8,716.5 15.2,710.6 15.2,701.2" fill="#eaa152" />
<polygon points="29.8,696.3 41.8,702.4 29.8,708.2 17.8,702.4" fill="#333" />
<line x1="29.8" y1="708" x2="29.8" y2="716.5" stroke="#222" stroke-width="1.2"/>
<rect x="12" y="750.7" width="36" height="5.5" fill="#eaa152"/>
<path d="M12,759 H48 V777 H42 A12,12 0 0 0 18,777 H12 Z" fill="#c4c4c4"/>
<rect x="26.4" y="799.5" width="6.6" height="6.6" fill="#c4c4c4"/><rect x="28.7" y="801.8" width="2" height="2" fill="#222"/>
<rect x="12.8" y="805.7" width="6.6" height="6.6" fill="#c4c4c4"/><rect x="15.100000000000001" y="808" width="2" height="2" fill="#222"/>
<rect x="39.6" y="805.7" width="6.6" height="6.6" fill="#c4c4c4"/><rect x="41.9" y="808" width="2" height="2" fill="#222"/>
<rect x="12.8" y="823.8000000000001" width="6.6" height="6.6" fill="#c4c4c4"/><rect x="15.100000000000001" y="826.1" width="2" height="2" fill="#222"/>
<rect x="39.6" y="823.8000000000001" width="6.6" height="6.6" fill="#c4c4c4"/><rect x="41.9" y="826.1" width="2" height="2" fill="#222"/>
<rect x="26.4" y="829.5" width="6.6" height="6.6" fill="#c4c4c4"/><rect x="28.7" y="831.8" width="2" height="2" fill="#222"/>
<path d="M20.5,807.5 L25.5,805 M34,805 L39,807.5 M16.1,813.5 V822.5 M42.9,813.5 V822.5 M20.5,829 L25.5,831 M34,831 L39,829" stroke="#c4c4c4" stroke-width="1.7"/>
<circle cx="29.7" cy="812.7" r="2.6" fill="none" stroke="#c4c4c4" stroke-width="1.5"/>
<path d="M25.8,815.5 H33.6 Q34.5,815.5 35,817 L36.9,824.5 Q37.2,826.2 35.5,826.2 H23.9 Q22.2,826.2 22.5,824.5 L24.4,817 Q24.9,815.5 25.8,815.5 Z" fill="#c4c4c4"/>
<path d="M24,856.7 H35.3 Q43.3,856.7 43.3,864.7 V880 Q43.3,893 29.7,893 Q16.1,893 16.1,880 V864.7 Q16.1,856.7 24,856.7 Z" fill="#c4c4c4"/>
<rect x="23" y="867" width="13.8" height="5" fill="#222"/><rect x="24" y="868" width="11.8" height="3" fill="#555"/>
<rect x="12" y="862.5" width="3.3" height="7.4" fill="#c4c4c4"/><rect x="45" y="862.5" width="3.3" height="7.4" fill="#c4c4c4"/>
<polyline points="32.7,915.6 29.7,914.3 15.7,921.6 15.7,940 19.6,942.2" fill="none" stroke="#c4c4c4" stroke-width="2"/>
<polyline points="37,918.8 23,926.7 23,945.9" fill="none" stroke="#eaa152" stroke-width="2.8" stroke-linecap="round" stroke-linejoin="round"/>
<polyline points="39.8,920.7 43.9,922.7 43.9,940.3 30.1,947.8 26.7,945.9" fill="none" stroke="#c4c4c4" stroke-width="2"/>
<polyline points="27,928.6 29.9,929.8 39.8,924.5" fill="none" stroke="#c4c4c4" stroke-width="2"/><line x1="29.9" y1="929.8" x2="29.9" y2="944.4" stroke="#c4c4c4" stroke-width="2"/>
<path d="M14.5,975 V969 H45.3 V975 M14.5,984 V987 M45.3,984 V987 M14.5,995.5 V1000.5 H45.3 V995.5" fill="none" stroke="#c4c4c4" stroke-width="2.4"/>
<rect x="13.5" y="977.5" width="33" height="3.5" fill="#eaa152"/><rect x="13.5" y="989.5" width="33" height="3.5" fill="#eaa152"/>
<path d="M12.9,1053.5 V1046 Q12.9,1037.5 22,1037.5 H42.5 V1033 H28.5 V1029.4 H43.5 Q46.5,1029.4 46.5,1032.5 V1053.5 Z" fill="#c4c4c4"/>
<circle cx="22" cy="1045.5" r="2.5" fill="#333"/>
<path d="M13,1080.5 H19.5 M28,1080.5 H46 M13,1109.5 H19.5 M28,1109.5 H46 M23.5,1078 V1111.5 M25,1095 H38.5 M30.5,1087.5 L38.5,1095 L30.5,1102.5" fill="none" stroke="#c4c4c4" stroke-width="2.8"/>
<rect x="7" y="908.2" width="54.8" height="54.9" fill="none" stroke="#e8432b" stroke-width="5.8"/>
<path d="M10.8,56 L10.8,67.2 L22,67.2 Z" fill="#c8c8c8"/><path d="M15.5,62.5 Q25,53.5 34,65.5" fill="none" stroke="#c8c8c8" stroke-width="3.2"/>
<path d="M70,56 L70,67.2 L58.8,67.2 Z" fill="#5e5e5e"/><path d="M65.3,62.5 Q55.8,53.5 46.8,65.5" fill="none" stroke="#5e5e5e" stroke-width="3.2"/>
<path d="M213.5,57.5 L223,66.5 M223,57.5 L213.5,66.5" stroke="#f0f0f0" stroke-width="2.2"/>
<path d="M256.6,55.2 V67.8 M250,61.5 H263.3" stroke="#f0f0f0" stroke-width="3"/>
<rect x="70.5" y="144" width="22.5" height="3.4" fill="#fff"/><rect x="70.5" y="151" width="22.5" height="3.4" fill="#fff"/><rect x="70.5" y="158" width="22.5" height="3.4" fill="#fff"/>
<path d="M1888.5,152 V146 Q1888.5,144.3 1890,144.3 Q1891.5,144.3 1891.5,146 V143.5 Q1891.5,142 1893,142 Q1894.5,142 1894.5,143.5 V143.7 Q1894.5,142.2 1896,142.2 Q1897.5,142.2 1897.5,143.7 V146.5 Q1897.5,145 1899,145 Q1900.5,145 1900.5,146.5 V156 Q1900.5,163.6 1894,163.6 Q1889,163.6 1887,158 L1885,153.5 Q1884.5,151.5 1886.3,151.6 Q1887.5,151.7 1888.5,153.5 Z" fill="#b8b8b8"/>
<path d="M1925.4,142.8 L1919.5,149 H1931.3 Z M1915.5,154.2 H1935.3 L1925.4,163.5 Z" fill="#b8b8b8"/><rect x="1924" y="148" width="2.8" height="7" fill="#b8b8b8"/>
<path d="M1949.5,145.5 A9.5,9.5 0 1 0 1963,148.5" fill="none" stroke="#b8b8b8" stroke-width="2.1"/><circle cx="1955.2" cy="153.5" r="3" fill="#b8b8b8"/><circle cx="1960.4" cy="145.4" r="2.8" fill="#b8b8b8"/>
<rect x="1976" y="144.1" width="18.5" height="18.5" rx="2" fill="none" stroke="#b8b8b8" stroke-width="2"/><path d="M1977,151 H1988 V162" fill="none" stroke="#b8b8b8" stroke-width="2"/>
<rect x="1084.3" y="183.5" width="10.5" height="8.8" rx="1" fill="none" stroke="#8f95b6" stroke-width="1.7"/><path d="M1086,183.5 V180.5 H1090.5" fill="none" stroke="#8f95b6" stroke-width="1.4"/><polygon points="1096,187.8 1100.8,184.5 1100.8,191.2" fill="#a0a6c8"/>
<line x1="1035" y1="171" x2="1035" y2="206" stroke="#5aa268" stroke-width="1.2"/>
<line x1="1947" y1="195" x2="1947" y2="223" stroke="#6fcf76" stroke-width="1.5"/>
<line x1="1947" y1="223" x2="1973.7" y2="223" stroke="#d8504c" stroke-width="1.5"/>
<line x1="1949" y1="222.5" x2="1970" y2="221.5" stroke="#4c78d0" stroke-width="1.1"/>
<path d="M1942.3,177 L1947.4,183 L1952.5,177 M1947.4,183 V188.8" fill="none" stroke="#6fcf76" stroke-width="1.6"/>
<path d="M1962,211.8 H1969.5 L1962,221.6 H1969.5" fill="none" stroke="#4c78d0" stroke-width="1.6"/>
<path d="M1980.5,217.5 L1989.3,228.8 M1989.3,217.5 L1980.5,228.8" fill="none" stroke="#d8504c" stroke-width="1.6"/>
<path d="M213,549.5 H225 M227.5,548 V561 M215,563.5 H228 M212.5,552 V565" fill="none" stroke="#7c6246" stroke-width="2.2"/><polygon points="218.5,552.5 222.5,557 218.5,559" fill="#b0b0b0"/></svg>
</body></html>
